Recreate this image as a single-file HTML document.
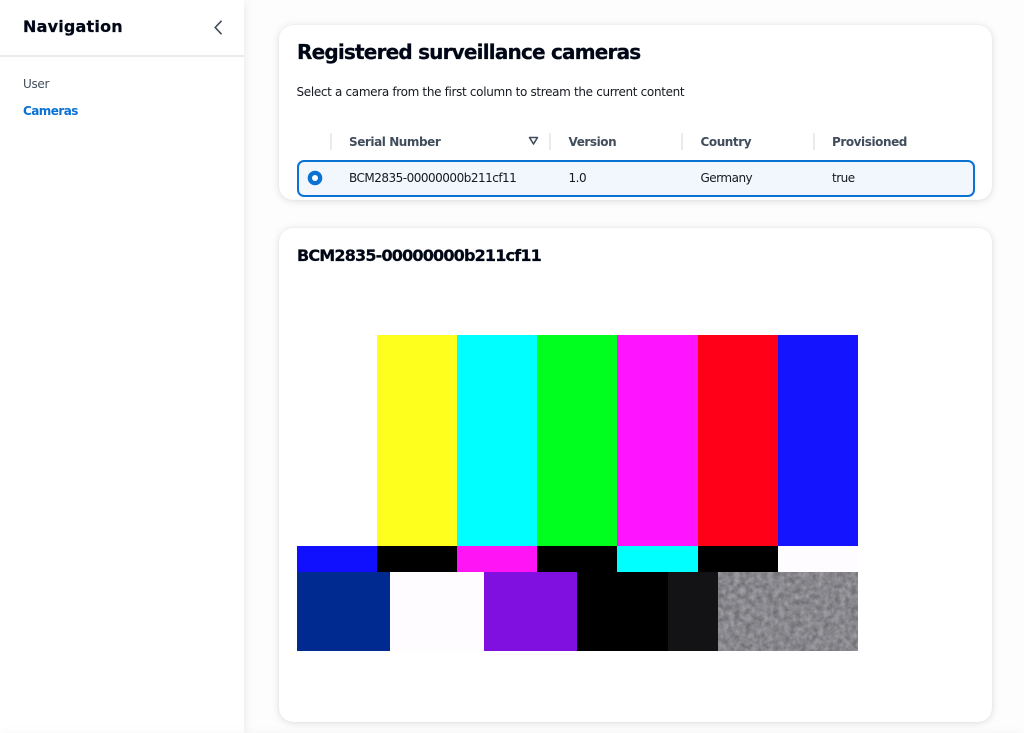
<!DOCTYPE html>
<html lang="en"><head><meta charset="utf-8"><title>Cameras</title>
<style>
html,body{margin:0;padding:0;width:1024px;height:733px;overflow:hidden;background:#fdfdfd;font-family:"DejaVu Sans","Liberation Sans",sans-serif;}
body{position:relative}
.a{position:absolute;white-space:nowrap}
.side{left:0;top:0;width:244px;height:733px;background:#fff;box-shadow:1px 0 10px rgba(0,7,22,.08)}
.card{left:279px;width:713px;background:#fff;border-radius:14px;box-shadow:0 1px 8px rgba(0,7,22,.13),0 0 1px rgba(0,7,22,.08)}
.h{font-weight:700;color:#000716;-webkit-text-stroke:.25px #000716}
.th{font-size:12px;font-weight:700;color:#414d5c;top:135px;line-height:15px;letter-spacing:-.43px}
.td{font-size:12px;color:#16191f;top:171px;line-height:15px;letter-spacing:-.5px}
.sep{top:133px;width:2px;height:17px;background:#e9ebed}
.b{position:absolute}
</style></head><body>
<div class="a side"></div>
<div class="a" style="left:0;top:733px;width:1024px;height:1px;box-shadow:0 0 8px rgba(0,7,22,.16)"></div>
<div class="a" style="left:0;top:55px;width:244px;height:2px;background:#e9ebed"></div>
<div class="a h" style="left:23px;top:16px;font-size:16px;line-height:22px;letter-spacing:.2px">Navigation</div>
<svg class="a" style="left:212px;top:19px" width="12" height="17" viewBox="0 0 12 17"><path d="M9.5 1.8 L3.2 8.5 L9.5 15.2" fill="none" stroke="#414d5c" stroke-width="1.6"/></svg>
<div class="a" style="left:23px;top:76px;font-size:12px;line-height:16px;color:#414d5c;letter-spacing:-.3px">User</div>
<div class="a" style="left:23px;top:103px;font-size:12px;line-height:16px;color:#0972d3;font-weight:700;letter-spacing:-.55px">Cameras</div>

<div class="a card" style="top:25px;height:175px"></div>
<div class="a h" style="left:297px;top:38px;font-size:20px;line-height:28px;letter-spacing:-.8px">Registered surveillance cameras</div>
<div class="a" style="left:296.5px;top:84px;font-size:12px;line-height:16px;color:#16191f;letter-spacing:-.33px">Select a camera from the first column to stream the current content</div>

<div class="a sep" style="left:330px"></div>
<div class="a th" style="left:349px">Serial Number</div>
<svg class="a" style="left:528px;top:136px" width="11" height="10" viewBox="0 0 11 10"><path d="M1.5 1.5 H9.5 L5.5 8 Z" fill="none" stroke="#414d5c" stroke-width="1.6" stroke-linejoin="round"/></svg>
<div class="a sep" style="left:549px"></div>
<div class="a th" style="left:568.5px">Version</div>
<div class="a sep" style="left:681px"></div>
<div class="a th" style="left:700.5px">Country</div>
<div class="a sep" style="left:813px"></div>
<div class="a th" style="left:832px">Provisioned</div>

<div class="a" style="left:297px;top:160px;width:674px;height:33px;background:#f1f7fd;border:2px solid #0972d3;border-radius:7px"></div>
<svg class="a" style="left:307px;top:170px" width="16" height="16" viewBox="0 0 16 16"><circle cx="8" cy="8" r="7.3" fill="#0972d3"/><circle cx="8" cy="8" r="3" fill="#fff"/></svg>
<div class="a td" style="left:349px">BCM2835-00000000b211cf11</div>
<div class="a td" style="left:568.5px">1.0</div>
<div class="a td" style="left:700.5px">Germany</div>
<div class="a td" style="left:832px">true</div>

<div class="a card" style="top:228px;height:494px"></div>
<div class="a h" style="left:297px;top:245px;font-size:16px;line-height:22px;letter-spacing:-.82px">BCM2835-00000000b211cf11</div>

<div class="b" style="left:377px;top:335px;width:80px;height:211px;background:#ffff1e"></div>
<div class="b" style="left:457px;top:335px;width:80px;height:211px;background:#00ffff"></div>
<div class="b" style="left:537px;top:335px;width:80px;height:211px;background:#00ff1e"></div>
<div class="b" style="left:617px;top:335px;width:81px;height:211px;background:#ff14ff"></div>
<div class="b" style="left:698px;top:335px;width:80px;height:211px;background:#ff0018"></div>
<div class="b" style="left:778px;top:335px;width:80px;height:211px;background:#1414ff"></div>

<div class="b" style="left:297px;top:546px;width:80px;height:26px;background:#1010ff"></div>
<div class="b" style="left:377px;top:546px;width:80px;height:26px;background:#000"></div>
<div class="b" style="left:457px;top:546px;width:80px;height:26px;background:#ff14f5"></div>
<div class="b" style="left:537px;top:546px;width:80px;height:26px;background:#000"></div>
<div class="b" style="left:617px;top:546px;width:81px;height:26px;background:#00ffff"></div>
<div class="b" style="left:698px;top:546px;width:80px;height:26px;background:#000"></div>
<div class="b" style="left:778px;top:546px;width:80px;height:26px;background:#fffcff"></div>

<div class="b" style="left:297px;top:572px;width:93px;height:79px;background:#002a8f"></div>
<div class="b" style="left:390px;top:572px;width:94px;height:79px;background:#fffcff"></div>
<div class="b" style="left:484px;top:572px;width:93px;height:79px;background:#8010e0"></div>
<div class="b" style="left:577px;top:572px;width:91px;height:79px;background:#000"></div>
<div class="b" style="left:668px;top:572px;width:50px;height:79px;background:#131316"></div>
<svg class="b" style="left:718px;top:572px" width="140" height="79" viewBox="0 0 140 79">
<filter id="n" x="0" y="0" width="100%" height="100%" color-interpolation-filters="sRGB"><feTurbulence type="fractalNoise" baseFrequency="0.18" numOctaves="3" seed="4"/><feColorMatrix type="matrix" values="0.3 0 0 0 0.38  0.3 0 0 0 0.38  0.3 0 0 0 0.4  0 0 0 0 1"/></filter>
<rect width="140" height="79" fill="#85858b"/><rect width="140" height="79" filter="url(#n)"/></svg>
</body></html>
